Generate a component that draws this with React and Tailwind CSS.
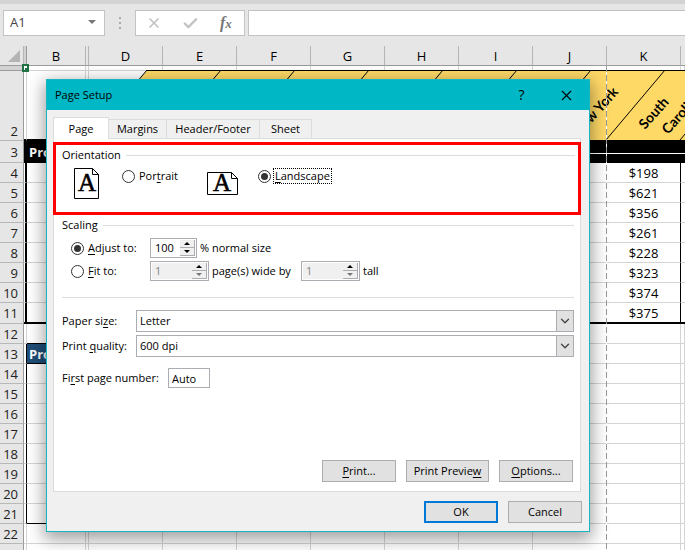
import { Check, X, ChevronDown } from 'lucide-react';

const columns = ['D', 'E', 'F', 'G', 'H', 'I', 'J', 'K'];
const prices = ['$198', '$621', '$356', '$261', '$228', '$323', '$374', '$375'];

const Key = ({ children }) => <u className="underline underline-offset-2">{children}</u>;

const FormulaBar = () => (
  <header className="flex h-[46px] border-t-4 border-[#d3d3d3] bg-[#e6e6e6] pt-[6px] pl-[3px] text-[#444]">
    <div className="flex h-[26px] w-[102px] items-center border border-[#c3c3c3] bg-white">
      <input aria-label="Name box" defaultValue="A1" className="w-[80px] bg-transparent pl-[6px] text-[13px] outline-none" />
      <button aria-label="Cell names" className="mt-[-2px] ml-[4px] border-x-4 border-t-4 border-x-transparent border-t-[#777]" />
    </div>
    <div className="flex h-[26px] w-[30px] flex-col items-center justify-center gap-[3px]">
      <i className="size-[2px] bg-[#aaa]" /><i className="size-[2px] bg-[#aaa]" /><i className="size-[2px] bg-[#aaa]" />
    </div>
    <div className="mr-[3px] flex h-[26px] w-[110px] items-center border border-[#c3c3c3] bg-white text-[#c3c3c3]">
      <button aria-label="Cancel entry" className="ml-[10px]"><X size={16} strokeWidth={2.6} /></button>
      <button aria-label="Enter" className="ml-[20px]"><Check size={17} strokeWidth={3.4} /></button>
      <button aria-label="Insert function" className="ml-[21px] font-['Liberation_Serif',serif] text-[16px] leading-[20px] font-bold text-[#777] italic">
        f<span className="text-[13px]">x</span>
      </button>
    </div>
    <input aria-label="Formula" className="h-[26px] min-w-0 flex-1 border border-r-0 border-[#c3c3c3] bg-white outline-none" />
  </header>
);

const RowHead = ({ n, className = 'align-middle' }) => (
  <th scope="row" className={`border-r border-b border-r-[#9b9b9b] border-b-[#b8b8b8] bg-[#e6e6e6] pr-[5px] text-right text-[13px] leading-[18px] font-normal text-[#222] ${className}`}>
    {n}
  </th>
);

const StateHeadings = () => (
  <svg className="absolute -top-px left-[-1px] h-[70px] w-[1200px]" viewBox="0 0 1200 70">
    <path d="M0 70 59 0H1200V70Z" fill="#ffd966" />
    <path d="M59 .5H1200" stroke="#000" />
    {Array.from({ length: 16 }, (_, i) => (
      <path key={i} d={`M${i * 74} 70l59-70`} stroke="#000" strokeWidth="1" />
    ))}
    <g className="font-['Lato',sans-serif] text-[14px] font-bold" fill="#000">
      <text transform="translate(491 67) rotate(-48)">New York</text>
      <text transform="translate(557 60) rotate(-48)">South</text>
      <text transform="translate(580 65) rotate(-48)">Carolina</text>
    </g>
  </svg>
);

const line = 'border-[#d4d4d4] border-r border-b';
const colHead = 'border-r border-b border-r-[#b5b5b5] border-b-[#9b9b9b] font-normal';

const Sheet = () => (
  <div className="relative">
    <table className="w-full table-fixed border-separate border-spacing-0 bg-white">
      <colgroup>
        <col className="w-[24px]" />
        <col className="w-[3px]" />
        <col className="w-[59px]" />
        <col className="w-[3px]" />
        {columns.map((c) => <col key={c} className="w-[74px]" />)}
        <col />
      </colgroup>
      <thead>
        <tr className="h-[20px] bg-[#e6e6e6] text-[13px] leading-[18px]">
          <th className={colHead}>
            <svg className="ml-[8px] h-[12px] w-[13px]" viewBox="0 0 13 12"><path d="M12 0V12H0Z" fill="#b4b4b4" /></svg>
          </th>
          <th scope="col" aria-label="A" className="border-r border-b border-[#9b9b9b] bg-[#d2d2d2]" />
          <th scope="col" className={colHead}>B</th>
          <th scope="col" aria-label="C" className={colHead} />
          {columns.map((c) => <th key={c} scope="col" className={colHead}>{c}</th>)}
          <th className="border-b border-[#9b9b9b]" />
        </tr>
      </thead>
      <tbody className="text-[13px] leading-[18px]">
        <tr className="h-[5px]">
          <th className="border-r border-b border-[#9b9b9b] bg-[#d2d2d2]" />
          {Array.from({ length: 12 }, (_, i) => <td key={i} className={line} />)}
        </tr>
        <tr className="h-[70px]">
          <RowHead n={2} className="align-bottom" />
          <td className="border-r border-b-2 border-r-[#d4d4d4] border-b-black" />
          <td className="border-r border-b-2 border-r-[#d4d4d4] border-b-black" />
          <td className="border-r border-b-2 border-r-[#d4d4d4] border-b-black" />
          <td colSpan={9} className="relative border-b-2 border-black"><StateHeadings /></td>
        </tr>
        <tr className="h-[22px] bg-black text-white">
          <RowHead n={3} />
          <td />
          <td className="pl-[2px] text-[13px] font-bold">Pro</td>
          <td />
          <td colSpan={9} className="align-top"><div className="mt-[12px] h-px bg-white" /></td>
        </tr>
        {prices.map((price, i) => {
          const last = i === prices.length - 1;
          const bottom = last ? 'border-b-2 border-b-black' : 'border-b border-b-[#d4d4d4]';
          return (
            <tr key={price} className={last ? 'h-[21px]' : 'h-[20px]'}>
              <RowHead n={i + 4} />
              <td className={`border-r-2 border-r-black ${bottom}`} />
              {Array.from({ length: 9 }, (_, c) => (
                <td key={c} className={`border-r border-r-transparent ${bottom}`} />
              ))}
              <td className={`border-r border-r-black text-center text-[13px] ${bottom}`}>{price}</td>
              <td className={bottom} />
            </tr>
          );
        })}
        {Array.from({ length: 12 }, (_, i) => {
          const n = i + 12;
          const boxed = n > 12 && n < 22;
          return (
            <tr key={n} className="h-[20px]">
              {n < 23
                ? <RowHead n={n} />
                : <th className="border-r border-[#9b9b9b] bg-[#e6e6e6]" />}
              <td className={`border-r border-b border-b-[#d4d4d4] ${boxed ? 'border-r-black' : 'border-r-[#d4d4d4]'}`} />
              {n === 13
                ? <td className="border-b border-black bg-[#1f4e78] pl-[2px] text-[13px] font-bold text-white">Pro</td>
                : <td className={`border-r border-b border-r-[#d4d4d4] ${n === 12 || n === 21 ? 'border-b-black' : 'border-b-[#d4d4d4]'}`} />}
              {Array.from({ length: 10 }, (_, c) => <td key={c} className={line} />)}
            </tr>
          );
        })}
      </tbody>
    </table>
    {/* active cell and the page break */}
    <div className="absolute top-[18px] left-[22px] h-[8px] w-[7px] border-2 border-[#217346] bg-white">
      <div className="mt-[2px] ml-[1px] size-[4px] bg-[#217346]" />
    </div>
    <div className="absolute top-[20px] bottom-0 left-[606px] w-px bg-white bg-[repeating-linear-gradient(#999_0_6px,transparent_6px_9px)]" />
  </div>
);

const Legend = ({ children }) => (
  <div className="flex h-[20px] items-center gap-[5px]">
    <span>{children}</span>
    <span className="h-px flex-1 bg-[#dcdcdc]" />
  </div>
);

const Radio = ({ id, ...props }) => (
  <input
    type="radio" id={id} {...props}
    className="flex size-[13px] shrink-0 appearance-none items-center justify-center rounded-full border border-[#333] bg-white checked:before:size-[7px] checked:before:rounded-full checked:before:bg-[#333]"
  />
);

const Spinner = ({ label, value, disabled, className }) => (
  <div className={`flex h-[20px] border border-[#abadb3] bg-white p-px ${className}`}>
    <input
      aria-label={label} defaultValue={value} disabled={disabled}
      className="w-0 min-w-0 flex-1 pl-[3px] outline-none disabled:bg-[#f0f0f0] disabled:text-[#838383]"
    />
    <div className="flex w-[15px] flex-col">
      <button aria-label={`${label} up`} className="flex flex-1 items-center justify-center border-r border-b border-[#abadb3] bg-[#f0f0f0]">
        <span className="border-x-3 border-b-3 border-x-transparent border-b-black" />
      </button>
      <button aria-label={`${label} down`} className="flex flex-1 items-center justify-center border-r border-b border-[#abadb3] bg-[#f0f0f0]">
        <span className={`border-x-3 border-t-3 border-x-transparent ${disabled ? 'border-t-[#777]' : 'border-t-black'}`} />
      </button>
    </div>
  </div>
);

const Dropdown = ({ id, label, value }) => (
  <div className="flex h-[22px] items-center">
    <label htmlFor={id} className="w-[74px] whitespace-nowrap">{label}</label>
    <div className="relative flex-1">
      <select id={id} className="block h-[22px] w-full appearance-none border border-[#abadb3] bg-white pl-[3px] outline-none">
        <option>{value}</option>
      </select>
      <span className="pointer-events-none absolute inset-y-0 right-0 flex w-[18px] items-center justify-center border border-[#abadb3] bg-[#e1e1e1]">
        <ChevronDown size={14} strokeWidth={2.2} className="text-[#444]" />
      </span>
    </div>
  </div>
);

const Button = ({ children, className = 'w-[74px] border border-[#adadad]' }) => (
  <button className={`h-[22px] bg-[#e1e1e1] text-center whitespace-nowrap ${className}`}>{children}</button>
);

const PageIcon = ({ landscape }) => {
  const w = landscape ? 31 : 25;
  const h = landscape ? 23 : 31;
  return (
    <svg width={w} height={h} viewBox={`0 0 ${w} ${h}`} className="shrink-0">
      <path d={`M.5 .5H${w - 6.5}L${w - 0.5} 6.5V${h - 0.5}H.5Z`} fill="#fff" stroke="#000" />
      <path d={`M${w - 6.5} .5V6.5H${w - 0.5}`} fill="none" stroke="#000" />
      <text x={landscape ? 15 : 13} y={landscape ? 19 : 23} textAnchor="middle" stroke="#000" strokeWidth="0.6" className="font-['Liberation_Serif',serif] text-[25px]">A</text>
    </svg>
  );
};

const PageSetup = () => (
  <div role="dialog" aria-label="Page Setup" className="absolute top-[79px] left-[46px] w-[544px] border border-[#19b5c0] bg-[#f0f0f0] text-[11px] leading-[16px] text-black shadow-[0_5px_16px_2px_rgba(0,0,0,0.38)]">
    <div className="flex h-[30px] items-center bg-[#00b7c6] pl-[8px]">
      <h1 className="flex-1">Page Setup</h1>
      <button aria-label="Help" className="w-[45px] text-[14px]">?</button>
      <button aria-label="Close" className="flex w-[45px] justify-center"><X size={17} strokeWidth={1.6} /></button>
    </div>
    <div className="mt-[7px] mr-[8px] ml-[6px]">
      <div role="tablist" className="flex h-[21px] items-end">
        <button role="tab" aria-selected="true" className="relative -mb-px h-[22px] w-[56px] border border-b-0 border-[#dcdcdc] bg-white">Page</button>
        <button role="tab" className="h-[19px] w-[58px] border-t border-r border-[#dcdcdc]">Margins</button>
        <button role="tab" className="h-[19px] w-[93px] border-t border-r border-[#dcdcdc]">Header/Footer</button>
        <button role="tab" className="h-[19px] w-[52px] border-t border-r border-[#dcdcdc]">Sheet</button>
      </div>
      <div role="tabpanel" className="border border-[#dcdcdc] bg-white pt-[3px] pb-[9px]">
        <section className="-mx-px border-3 border-[#ff0000] pr-[3px] pb-[13px] pl-[6px]">
          <Legend>Orientation</Legend>
          <div className="mt-[3px] ml-[12px] flex h-[31px] items-center">
            <PageIcon />
            <div className="ml-[23px] flex h-[16px] w-[85px] items-center gap-[4px] self-start">
              <Radio id="portrait" name="orientation" />
              <label htmlFor="portrait">Por<Key>t</Key>rait</label>
            </div>
            <PageIcon landscape />
            <div className="ml-[20px] flex h-[16px] items-center gap-[2px] self-start">
              <Radio id="landscape" name="orientation" defaultChecked />
              <label htmlFor="landscape" className="border border-dotted border-black px-px leading-[14px]"><Key>L</Key>andscape</label>
            </div>
          </div>
        </section>
        <div className="pr-[6px] pl-[8px]">
          <Legend>Scaling</Legend>
          <div className="mt-[3px] ml-[9px] flex h-[20px] items-center">
            <Radio id="adjust" name="scaling" defaultChecked />
            <label htmlFor="adjust" className="ml-[4px] w-[62px]"><Key>A</Key>djust to:</label>
            <Spinner label="Percent of normal size" value="100" className="w-[47px]" />
            <span className="ml-[3px]">% normal size</span>
          </div>
          <div className="mt-[3px] ml-[9px] flex h-[20px] items-center">
            <Radio id="fit" name="scaling" />
            <label htmlFor="fit" className="ml-[4px] w-[62px]"><Key>F</Key>it to:</label>
            <Spinner label="Pages wide" value="1" disabled className="w-[59px]" />
            <span className="ml-[3px] w-[89px] whitespace-nowrap">page(s) wide by</span>
            <Spinner label="Pages tall" value="1" disabled className="w-[59px]" />
            <span className="ml-[3px]">tall</span>
          </div>
          <hr className="mt-[16px] mb-[12px] border-[#dcdcdc]" />
          <div className="flex flex-col gap-[3px]">
            <Dropdown id="paper" label={<>Paper si<Key>z</Key>e:</>} value="Letter" />
            <Dropdown id="quality" label={<>Print <Key>q</Key>uality:</>} value="600 dpi" />
          </div>
          <div className="mt-[11px] flex items-center">
            <label htmlFor="first" className="w-[106px] whitespace-nowrap">Fi<Key>r</Key>st page number:</label>
            <input id="first" defaultValue="Auto" className="h-[20px] w-[42px] border border-[#abadb3] pl-[3px] outline-none" />
          </div>
          <div className="mt-[72px] mr-px flex justify-end gap-[10px]">
            <Button><Key>P</Key>rint...</Button>
            <Button className="w-[83px] border border-[#adadad]">Print Previe<Key>w</Key></Button>
            <Button><Key>O</Key>ptions...</Button>
          </div>
        </div>
      </div>
    </div>
    <div className="mt-[9px] mr-[7px] mb-[8px] flex justify-end gap-[10px]">
      <Button className="w-[74px] border-2 border-[#0078d7]">OK</Button>
      <Button>Cancel</Button>
    </div>
  </div>
);

export default function App() {
  return (
    <div className="relative h-screen overflow-hidden bg-white font-['Open_Sans','Noto_Sans',sans-serif] text-black">
      <FormulaBar />
      <Sheet />
      <PageSetup />
    </div>
  );
}
